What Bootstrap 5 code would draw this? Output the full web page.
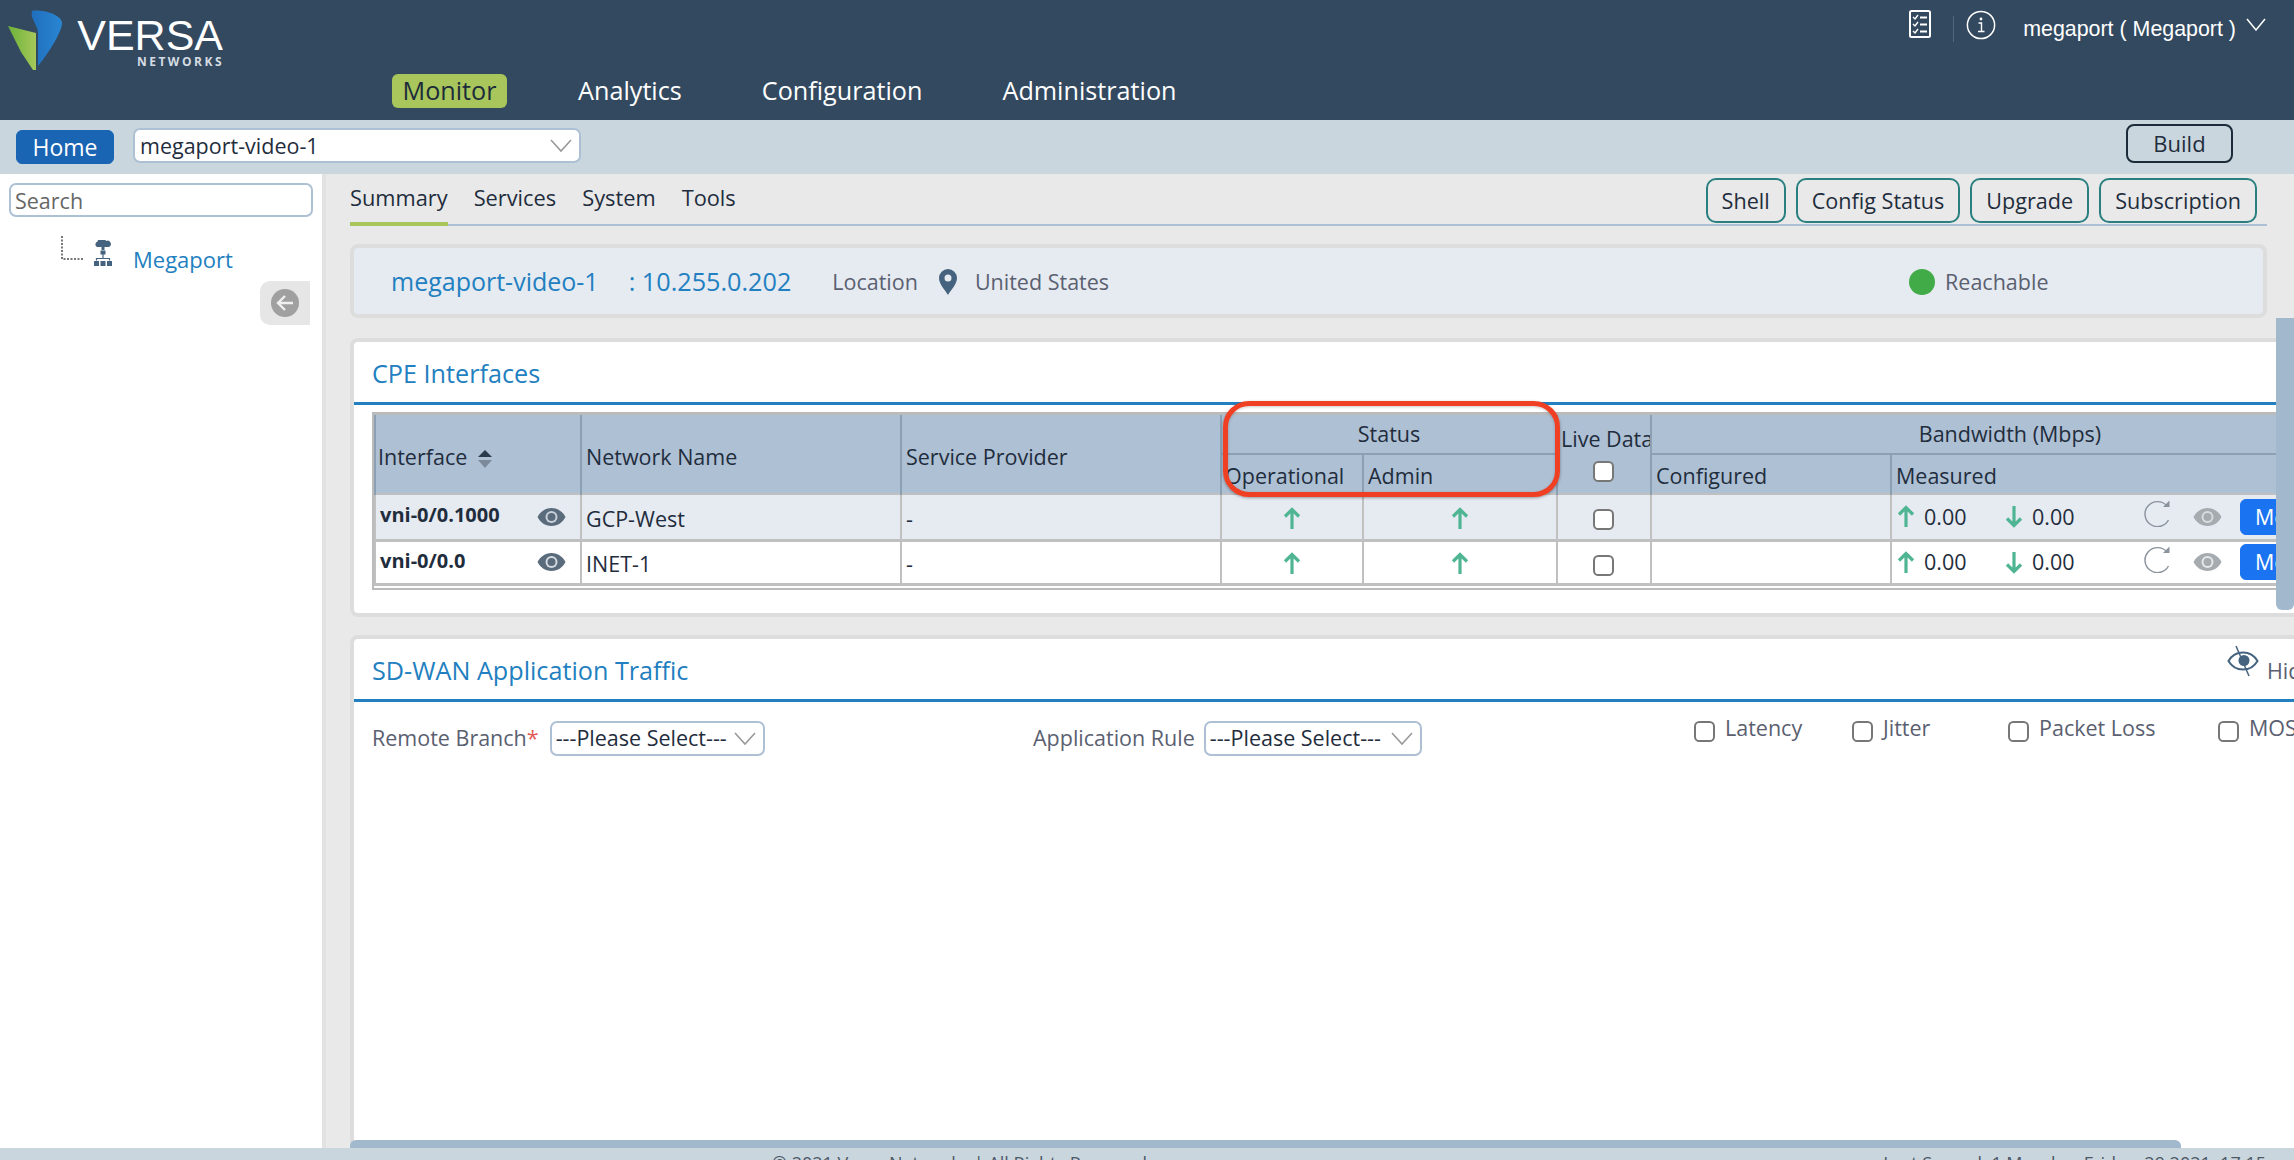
<!DOCTYPE html>
<html lang="en">
<head>
<meta charset="utf-8">
<title>Versa Networks - Monitor</title>
<link rel="stylesheet" href="https://cdn.jsdelivr.net/npm/bootstrap@5.3.0/dist/css/bootstrap.min.css">
<style>
html,body{height:1160px;overflow:hidden;margin:0}
body{font-family:"Open Sans","Liberation Sans",sans-serif;font-size:21.5px;color:#1f2d3d;background:#fff}
.shell{position:relative;width:2294px;height:1160px;overflow:hidden}
.topbar{height:120px;background:#33495f;color:#fff}
.toprow{height:74px}
.brand{width:240px;height:74px}
.brandtext{margin-left:13px;padding-top:14px;line-height:1;width:146px}
.brandname{font-family:"Liberation Sans",sans-serif;font-size:43px;font-weight:400;line-height:42px;color:#fff;white-space:nowrap;height:42px;overflow:hidden}
.brandsub{font-family:"Open Sans",sans-serif;font-size:12px;font-weight:700;letter-spacing:2.5px;color:#d5dce3;line-height:12px;margin-top:0;margin-right:-1px}
.utils{padding-right:28px;padding-top:10px;height:50px}
.utilsep{width:1px;height:26px;background:#55677a;margin:6px 12px 0 22px}
.username{font-family:"Liberation Sans",sans-serif;font-size:21.4px;margin:3px 10px 0 27px;white-space:nowrap}
.mainnav{padding-left:392px;gap:62px;height:34px}
.mainlink{font-size:25.2px;line-height:33px;height:34px;padding:0 9px;color:#fff;border-radius:6px;text-decoration:none}
.mainlink.on{background:#a8c65c;color:#1c2b3a;padding:0 10.500px}
.subbar{height:54px;background:#c9d6de;padding-left:16px;padding-right:61px}
.homebtn{width:98px;height:34px;padding:0;font-size:23px;line-height:32px;background:#1a64b4;border-color:#1a64b4;color:#fff;border-radius:6px;margin-top:10px}
.pick{font-family:"Open Sans",sans-serif;font-size:21.5px;color:#1f2d3d;border:2px solid #adc0d4;border-radius:7px;height:35px;padding:0 30px 0 5px;background-color:#fff;background-repeat:no-repeat;background-image:url("data:image/svg+xml,%3Csvg xmlns='http://www.w3.org/2000/svg' width='22' height='14'%3E%3Cpath d='M1 1l10 11L21 1' fill='none' stroke='%23999' stroke-width='1.6'/%3E%3C/svg%3E");background-position:right 7px center;background-size:22px 14px;line-height:30px}
.pickdevice{width:448px;margin:8px 0 0 19px}
.buildbtn{width:107px;height:39px;padding:0;font-size:22px;color:#1f2d3d;border:2px solid #1c2b3a;border-radius:8px;margin-top:4px;background:transparent}
.mainarea{height:974px}
.sidepane{width:326px;flex:none;background:#fff;border-right:4px solid #e2e2e2;padding:9px 9px 0 9px;position:relative}
.searchbox{width:304px;height:34px;border:2px solid #adc0d4;border-radius:7px;padding:0 4px;font-size:21.5px;color:#555}
.searchbox::placeholder{color:#666;opacity:1}
.treerow{padding:19px 0 0 52px;height:60px}
.treelink{color:#2280c0;font-size:22px;text-decoration:none;margin-left:20px;margin-top:7px}
.collapsetab{width:50px;height:44px;background:#e6e6e6;border-radius:10px 0 0 10px;margin:4px 0 0 251px}
.contentpane{flex:1;min-width:0;background:#e9e9e9;padding-left:24px;overflow:hidden}
.tabrow{width:1917px;height:52px;border-bottom:2px solid #adc0d4}
.tabitem{font-size:21.8px;color:#1f2d3d;text-decoration:none;height:52px;line-height:47px;padding:0}
.tabitem.on{border-bottom:4px solid #a8c65c;height:52px;margin-bottom:-2px}
.tabset{gap:26px}
.actionset{gap:10px;padding:4px 10px 0 0}
.actionbtn{height:45px;padding:0 14px;font-size:21.6px;color:#1f2d3d;background:transparent;border:2px solid #2a8080;border-radius:10px;line-height:38px}
.devicebar{width:1917px;height:74px;margin-top:18px;background:#e6ebf2;border:4px solid #ddd;border-radius:8px;padding:2px 0 0 37px;color:#5a6070}
.devicename{color:#2280c0;font-size:25px;font-weight:400}
.deviceip{color:#2280c0;font-size:25.2px;margin-left:30px}
.devicelabel{margin-left:41px}
.pinmark{margin:0 18px 0 21px}
.reachable{margin-left:800px}
.dotgreen{width:26px;height:26px;border-radius:50%;background:#41ab47;margin-right:10px}
.panel{width:2100px;background:#fff;border:4px solid #ddd;border-radius:8px;border-right:0;display:block}
.panelone{height:279px;margin-top:20px}
.paneltwo{height:560px;margin-top:18px}
.panelhead{height:63px;border:0;border-bottom:3px solid #2280c0;background:#fff;padding:0 0 0 18px;border-radius:0}
.paneltitle{color:#2280c0;font-size:25.2px;font-weight:400;margin:0;padding-top:16px;line-height:30px}
.gridwrap{margin:7px 0 0 18px;width:2000px;position:relative;border-top:3px solid #bbb;border-bottom:2px solid #bbb;padding-bottom:2px;border-left:2px solid #bbb}
.table.cpe-grid{table-layout:fixed;width:1995px;margin:0;font-size:21.5px;border-collapse:collapse;color:#1f2d3d}
.table.cpe-grid th,.table.cpe-grid td{padding:0 4px;vertical-align:middle;overflow:hidden;white-space:nowrap;line-height:1.2}
.table.cpe-grid th{background:#aec0d4;font-weight:400;border:2px solid #8ba0b3;border-top:0;border-bottom:0;color:#1f2d3d;box-shadow:none}
.table.cpe-grid thead tr:first-child th.spanhead{border-bottom:2px solid #8ba0b3}
.table.cpe-grid td{border:2px solid #c0c0c0;border-bottom:3px solid #c0c0c0;background:#fff;box-shadow:none}
.table.cpe-grid tr.tint td{background:#e6ebf2}
.table.cpe-grid tr.headtop{height:39px}
.table.cpe-grid tr.headsub{height:40px}
.table.cpe-grid tr.headsub th{padding-top:3px}
.table.cpe-grid th.lowhead{padding-top:6px}
.table.cpe-grid th.firsthead{padding-left:2px}
.table.cpe-grid th.livehead{padding-left:3px}
.table.cpe-grid th.ophead{padding:3px 0 0 3px}
.table.cpe-grid td.lowcell{padding-top:4px}
.table.cpe-grid tr.rowone{height:46px}
.table.cpe-grid tr.rowtwo{height:44px}
.c1{width:206px}.c2{width:320px}.c3{width:320px}.c4{width:142px}.c5{width:194px}.c6{width:94px}.c7{width:240px}.c8{width:478px}
.tick{width:21px;height:21px;border:2px solid #777;border-radius:4px;margin:0;float:none;display:block}
.livehead .tick{margin:10px 0 0 32px}
.tickcell .tick{margin:6px 0 0 31px}
.ifname{font-weight:700;font-size:20px;margin-top:-3px}
.ifcell{justify-content:space-between;padding:0 10px 0 0}
.metricrow{padding-left:1px}
.metricval{width:81px;margin-left:9px}
.refreshmark{margin:-6px 22px 0 31px}
.morebtn{width:110px;height:36px;padding:0 0 0 14px;font-size:21.5px;text-align:left;background:#1a73f0;border-color:#1a73f0;color:#fff;border-radius:6px;margin-left:18px}
.arrowcell{text-align:center}
.statusring{position:absolute;left:849px;top:-14px;width:337px;height:96px;border:5px solid #ef4023;border-radius:26px;box-shadow:0 1px 3px rgba(0,0,0,.35),inset 0 1px 3px rgba(0,0,0,.2);pointer-events:none}
.formrow{padding:19px 0 0 18px;width:1960px}
.filterlabel{color:#5a6070;font-size:21.5px}
.reqmark{color:#e15a5a}
.pickfilter{width:215px;margin-left:11px;padding:0 30px 3px 4px;background-size:22px 14px}
.pickrule{width:218px;margin-left:9px}
.firstgroup{width:661px;flex:none}
.secondgroup{width:661px;flex:none}
.optcheck{color:#5a6070;font-size:21.5px;margin-top:-9px;flex:none}
.optcheck .tick{margin-right:10px;margin-top:6px}
.optlat{width:158px}.optjit{width:156px}.optpkt{width:210px}
.hidelink{padding:6px 0 0 0;color:#5a6070;font-size:21.5px;width:174px;margin-left:auto;margin-right:49px;gap:8px}
.hidelink span{padding-top:10px}
.footerbar{height:12px;background:#c9d6de;overflow:hidden;font-size:18px;color:#4d5866;padding:2px 28px 0 772px;line-height:27px}
.vscroll{position:absolute;left:2276px;top:318px;width:18px;height:292px;background:#a2b8cd;border-radius:0 0 6px 6px}
.hscroll{position:absolute;left:350px;top:1140px;width:1831px;height:8px;background:#a2b8cd;border-radius:6px 6px 0 0}
</style>
</head>
<body>
<div class="shell">
  <header class="topbar">
    <div class="toprow d-flex justify-content-between">
      <div class="brand d-flex">
        <svg width="64" height="74" viewBox="0 0 64 74" aria-hidden="true">
          <defs>
            <linearGradient id="gb" x1="0" y1="0" x2="1" y2="0"><stop offset="0" stop-color="#1f6fbe"/><stop offset="1" stop-color="#2a86d2"/></linearGradient>
            <linearGradient id="gg" x1="0" y1="0" x2="1" y2="0"><stop offset="0" stop-color="#6cb23a"/><stop offset="1" stop-color="#a6c85a"/></linearGradient>
          </defs>
          <path d="M8 26L36 33V70H33L21 52Z" fill="url(#gg)"/>
          <path d="M32 11C40 9 62 14 62 23C62 33 45 58 38 66V33C38 25 30 19 32 11Z" fill="url(#gb)"/>
        </svg>
        <div class="brandtext text-end">
          <div class="brandname">VERSA</div>
          <div class="brandsub">NETWORKS</div>
        </div>
      </div>
      <div class="utils d-flex align-items-start">
        <svg width="22" height="28" viewBox="0 0 22 28" aria-hidden="true">
          <rect x="1" y="1" width="20" height="26" rx="1.5" fill="none" stroke="#fff" stroke-width="2"/>
          <path d="M4 7l2 2 3-4M4 14l2 2 3-4M4 21l2 2 3-4" fill="none" stroke="#fff" stroke-width="1.4"/>
          <path d="M11 7.500h7M11 14.500h7M11 21.500h7" stroke="#fff" stroke-width="2"/>
        </svg>
        <span class="utilsep"></span>
        <svg width="30" height="30" viewBox="0 0 30 30" aria-hidden="true">
          <circle cx="15" cy="15" r="13.600" fill="none" stroke="#fff" stroke-width="1.500"/>
          <circle cx="15" cy="9" r="1.400" fill="#fff"/>
          <path d="M12.500 13H15.500V21M12 21.500H18.500" fill="none" stroke="#fff" stroke-width="1.400"/>
        </svg>
        <span class="username">megaport ( Megaport )</span>
        <svg width="20" height="13" viewBox="0 0 20 13" class="mt-2" aria-hidden="true"><path d="M1 1l9 11 9-11" fill="none" stroke="#fff" stroke-width="1.500"/></svg>
      </div>
    </div>
    <nav class="mainnav d-flex">
      <a class="mainlink on" href="#">Monitor</a>
      <a class="mainlink" href="#">Analytics</a>
      <a class="mainlink" href="#">Configuration</a>
      <a class="mainlink" href="#">Administration</a>
    </nav>
  </header>
  <div class="subbar d-flex align-items-start">
    <button type="button" class="btn homebtn">Home</button>
    <select class="form-select pick pickdevice"><option>megaport-video-1</option></select>
    <button type="button" class="btn buildbtn ms-auto">Build</button>
  </div>
  <div class="mainarea d-flex">
    <aside class="sidepane">
      <input class="form-control searchbox" type="text" placeholder="Search">
      <div class="treerow d-flex align-items-start">
        <svg width="24" height="24" viewBox="0 0 24 24" aria-hidden="true"><path d="M1 0V23H23" fill="none" stroke="#777" stroke-width="2" stroke-dasharray="2 1.500"/></svg>
        <svg width="20" height="26" viewBox="0 0 20 26" class="ms-2 mt-1" aria-hidden="true">
          <path d="M4 7a3 3 0 0 1 .5-5.500A4.500 4.500 0 0 1 13 1a3.300 3.300 0 0 1 3 6Z" fill="#45637f"/>
          <rect x="8.500" y="7" width="3" height="3" fill="#45637f"/>
          <rect x="7.500" y="10.500" width="5" height="4" fill="#45637f"/>
          <path d="M10 14v4M3.500 20.500v-2h13v2" fill="none" stroke="#45637f" stroke-width="1.200"/>
          <path d="M1 21h5v5H1zM7.500 21h5v5h-5zM14 21h5v5h-5z" fill="#45637f"/>
        </svg>
        <a class="treelink" href="#">Megaport</a>
      </div>
      <div class="collapsetab d-flex align-items-center justify-content-center">
        <svg width="28" height="28" viewBox="0 0 28 28" aria-hidden="true"><circle cx="14" cy="14" r="14" fill="#a0a0a0"/><path d="M22 14H7M14 7l-7 7 7 7" fill="none" stroke="#f0f0f0" stroke-width="2.400"/></svg>
      </div>
    </aside>
    <main class="contentpane">
      <div class="tabrow d-flex justify-content-between">
        <nav class="nav tabset">
          <a class="tabitem on" href="#">Summary</a>
          <a class="tabitem" href="#">Services</a>
          <a class="tabitem" href="#">System</a>
          <a class="tabitem" href="#">Tools</a>
        </nav>
        <div class="actionset d-flex">
          <button type="button" class="btn actionbtn">Shell</button>
          <button type="button" class="btn actionbtn">Config Status</button>
          <button type="button" class="btn actionbtn">Upgrade</button>
          <button type="button" class="btn actionbtn">Subscription</button>
        </div>
      </div>
      <section class="devicebar d-flex align-items-center">
        <span class="devicename">megaport-video-1</span>
        <span class="deviceip">: 10.255.0.202</span>
        <span class="devicelabel">Location</span>
        <svg class="pinmark" width="18" height="26" viewBox="0 0 18 26" aria-hidden="true"><path fill-rule="evenodd" d="M9 0a9 9 0 0 1 9 9c0 6-6 12-9 17C6 21 0 15 0 9a9 9 0 0 1 9-9Zm0 5.500a3.500 3.500 0 1 0 0 7 3.500 3.500 0 0 0 0-7Z" fill="#45637f"/></svg>
        <span>United States</span>
        <span class="reachable d-flex align-items-center"><span class="dotgreen"></span>Reachable</span>
      </section>

      <section class="card panel panelone">
        <div class="card-header panelhead"><h2 class="paneltitle">CPE Interfaces</h2></div>
        <div class="gridwrap">
          <table class="table cpe-grid">
            <colgroup><col class="c1"><col class="c2"><col class="c3"><col class="c4"><col class="c5"><col class="c6"><col class="c7"><col class="c8"></colgroup>
            <thead>
              <tr class="headtop">
                <th rowspan="2" class="lowhead firsthead">Interface
                  <svg width="16" height="20" viewBox="0 0 16 20" class="ms-1" aria-hidden="true"><path d="M8 1l7 7H1z" fill="#2b3a4a"/><path d="M1 11h14l-7 8z" fill="#7c8a99"/></svg>
                </th>
                <th rowspan="2" class="lowhead">Network Name</th>
                <th rowspan="2" class="lowhead">Service Provider</th>
                <th colspan="2" class="spanhead text-center">Status</th>
                <th rowspan="2" class="livehead"><div>Live Data</div><input class="form-check-input tick" type="checkbox" aria-label="Live data"></th>
                <th colspan="2" class="spanhead text-center">Bandwidth (Mbps)</th>
              </tr>
              <tr class="headsub">
                <th class="ophead">Operational</th>
                <th>Admin</th>
                <th>Configured</th>
                <th>Measured</th>
              </tr>
            </thead>
            <tbody>
              <tr class="rowone tint">
                <td><div class="d-flex align-items-center ifcell"><span class="ifname">vni-0/0.1000</span>
                  <svg width="29" height="20" viewBox="0 0 29 20" aria-hidden="true"><path d="M14.500 1C8 1 3 5 .5 10 3 15 8 19 14.500 19S26 15 28.500 10C26 5 21 1 14.500 1Z" fill="#5a6b7c"/><circle cx="14.500" cy="10" r="6" fill="#c9d2db"/><circle cx="14.500" cy="10" r="4" fill="#5a6b7c"/></svg>
                </div></td>
                <td class="lowcell">GCP-West</td><td class="lowcell">-</td>
                <td class="arrowcell"><svg width="18" height="23" viewBox="0 0 18 23" aria-hidden="true"><path d="M9 22V3M2 9.500L9 2.500l7 7" fill="none" stroke="#4fb592" stroke-width="3.200"/></svg></td>
                <td class="arrowcell"><svg width="18" height="23" viewBox="0 0 18 23" aria-hidden="true"><path d="M9 22V3M2 9.500L9 2.500l7 7" fill="none" stroke="#4fb592" stroke-width="3.200"/></svg></td>
                <td class="tickcell"><input class="form-check-input tick" type="checkbox" aria-label="Live vni-0/0.1000"></td>
                <td></td>
                <td><div class="d-flex align-items-center metricrow">
                  <svg width="18" height="23" viewBox="0 0 18 23" aria-hidden="true"><path d="M9 22V3M2 9.500L9 2.500l7 7" fill="none" stroke="#4fb592" stroke-width="3.200"/></svg><span class="metricval">0.00</span>
                  <svg width="18" height="23" viewBox="0 0 18 23" aria-hidden="true"><path d="M9 1v19M2 13.500l7 7 7-7" fill="none" stroke="#4fb592" stroke-width="3.200"/></svg><span class="metricval">0.00</span>
                  <svg class="refreshmark" width="27" height="27" viewBox="0 0 27 27" aria-hidden="true"><path d="M23 6A12.500 12.500 0 1 0 24.500 20" fill="none" stroke="#8a929c" stroke-width="1.400"/><path d="M19 7l6.500 0 0-6.500z" fill="#8a929c"/></svg>
                  <svg width="29" height="20" viewBox="0 0 29 20" aria-hidden="true"><path d="M14.500 1C8 1 3 5 .5 10 3 15 8 19 14.500 19S26 15 28.500 10C26 5 21 1 14.500 1Z" fill="#a6abb0"/><circle cx="14.500" cy="10" r="6" fill="#d8dce0"/><circle cx="14.500" cy="10" r="4" fill="#a6abb0"/></svg>
                  <button type="button" class="btn morebtn">More</button>
                </div></td>
              </tr>
              <tr class="rowtwo">
                <td><div class="d-flex align-items-center ifcell"><span class="ifname">vni-0/0.0</span>
                  <svg width="29" height="20" viewBox="0 0 29 20" aria-hidden="true"><path d="M14.500 1C8 1 3 5 .5 10 3 15 8 19 14.500 19S26 15 28.500 10C26 5 21 1 14.500 1Z" fill="#5a6b7c"/><circle cx="14.500" cy="10" r="6" fill="#d6dbe1"/><circle cx="14.500" cy="10" r="4" fill="#5a6b7c"/></svg>
                </div></td>
                <td class="lowcell">INET-1</td><td class="lowcell">-</td>
                <td class="arrowcell"><svg width="18" height="23" viewBox="0 0 18 23" aria-hidden="true"><path d="M9 22V3M2 9.500L9 2.500l7 7" fill="none" stroke="#4fb592" stroke-width="3.200"/></svg></td>
                <td class="arrowcell"><svg width="18" height="23" viewBox="0 0 18 23" aria-hidden="true"><path d="M9 22V3M2 9.500L9 2.500l7 7" fill="none" stroke="#4fb592" stroke-width="3.200"/></svg></td>
                <td class="tickcell"><input class="form-check-input tick" type="checkbox" aria-label="Live vni-0/0.0"></td>
                <td></td>
                <td><div class="d-flex align-items-center metricrow">
                  <svg width="18" height="23" viewBox="0 0 18 23" aria-hidden="true"><path d="M9 22V3M2 9.500L9 2.500l7 7" fill="none" stroke="#4fb592" stroke-width="3.200"/></svg><span class="metricval">0.00</span>
                  <svg width="18" height="23" viewBox="0 0 18 23" aria-hidden="true"><path d="M9 1v19M2 13.500l7 7 7-7" fill="none" stroke="#4fb592" stroke-width="3.200"/></svg><span class="metricval">0.00</span>
                  <svg class="refreshmark" width="27" height="27" viewBox="0 0 27 27" aria-hidden="true"><path d="M23 6A12.500 12.500 0 1 0 24.500 20" fill="none" stroke="#8a929c" stroke-width="1.400"/><path d="M19 7l6.500 0 0-6.500z" fill="#8a929c"/></svg>
                  <svg width="29" height="20" viewBox="0 0 29 20" aria-hidden="true"><path d="M14.500 1C8 1 3 5 .5 10 3 15 8 19 14.500 19S26 15 28.500 10C26 5 21 1 14.500 1Z" fill="#a6abb0"/><circle cx="14.500" cy="10" r="6" fill="#e6e8ea"/><circle cx="14.500" cy="10" r="4" fill="#a6abb0"/></svg>
                  <button type="button" class="btn morebtn">More</button>
                </div></td>
              </tr>
            </tbody>
          </table>
          <div class="statusring"></div>
        </div>
      </section>

      <section class="card panel paneltwo">
        <div class="card-header panelhead d-flex">
          <h2 class="paneltitle">SD-WAN Application Traffic</h2>
          <div class="hidelink d-flex align-items-start align-self-start">
            <svg width="32" height="32" viewBox="0 0 32 32" aria-hidden="true"><path d="M1.500 16C5 10 10 7.500 16 7.500S27 10 30.500 16C27 22 22 24.500 16 24.500S5 22 1.500 16Z" fill="none" stroke="#45637f" stroke-width="2"/><circle cx="17" cy="15.500" r="5.500" fill="#45637f"/><path d="M9 1l13 30" stroke="#45637f" stroke-width="1.500"/></svg>
            <span>Hide</span>
          </div>
        </div>
        <div class="formrow d-flex align-items-start">
          <div class="d-flex align-items-center firstgroup">
            <span class="filterlabel">Remote Branch<span class="reqmark">*</span></span>
            <select class="form-select pick pickfilter"><option>---Please Select---</option></select>
          </div>
          <div class="d-flex align-items-center secondgroup">
            <span class="filterlabel">Application Rule</span>
            <select class="form-select pick pickfilter pickrule"><option>---Please Select---</option></select>
          </div>
          <label class="optcheck optlat d-flex align-items-center"><input class="form-check-input tick" type="checkbox">Latency</label>
          <label class="optcheck optjit d-flex align-items-center"><input class="form-check-input tick" type="checkbox">Jitter</label>
          <label class="optcheck optpkt d-flex align-items-center"><input class="form-check-input tick" type="checkbox">Packet Loss</label>
          <label class="optcheck d-flex align-items-center"><input class="form-check-input tick" type="checkbox">MOS</label>
        </div>
      </section>
    </main>
  </div>
  <footer class="footerbar d-flex justify-content-between">
    <span>© 2021 Versa Networks | All Rights Reserved</span>
    <span>Last Synced: 1 Monday, Friday, 29 2021, 17:15</span>
  </footer>
  <div class="vscroll"></div>
  <div class="hscroll"></div>
</div>
<script src="https://cdn.jsdelivr.net/npm/bootstrap@5.3.0/dist/js/bootstrap.bundle.min.js"></script>
</body>
</html>
